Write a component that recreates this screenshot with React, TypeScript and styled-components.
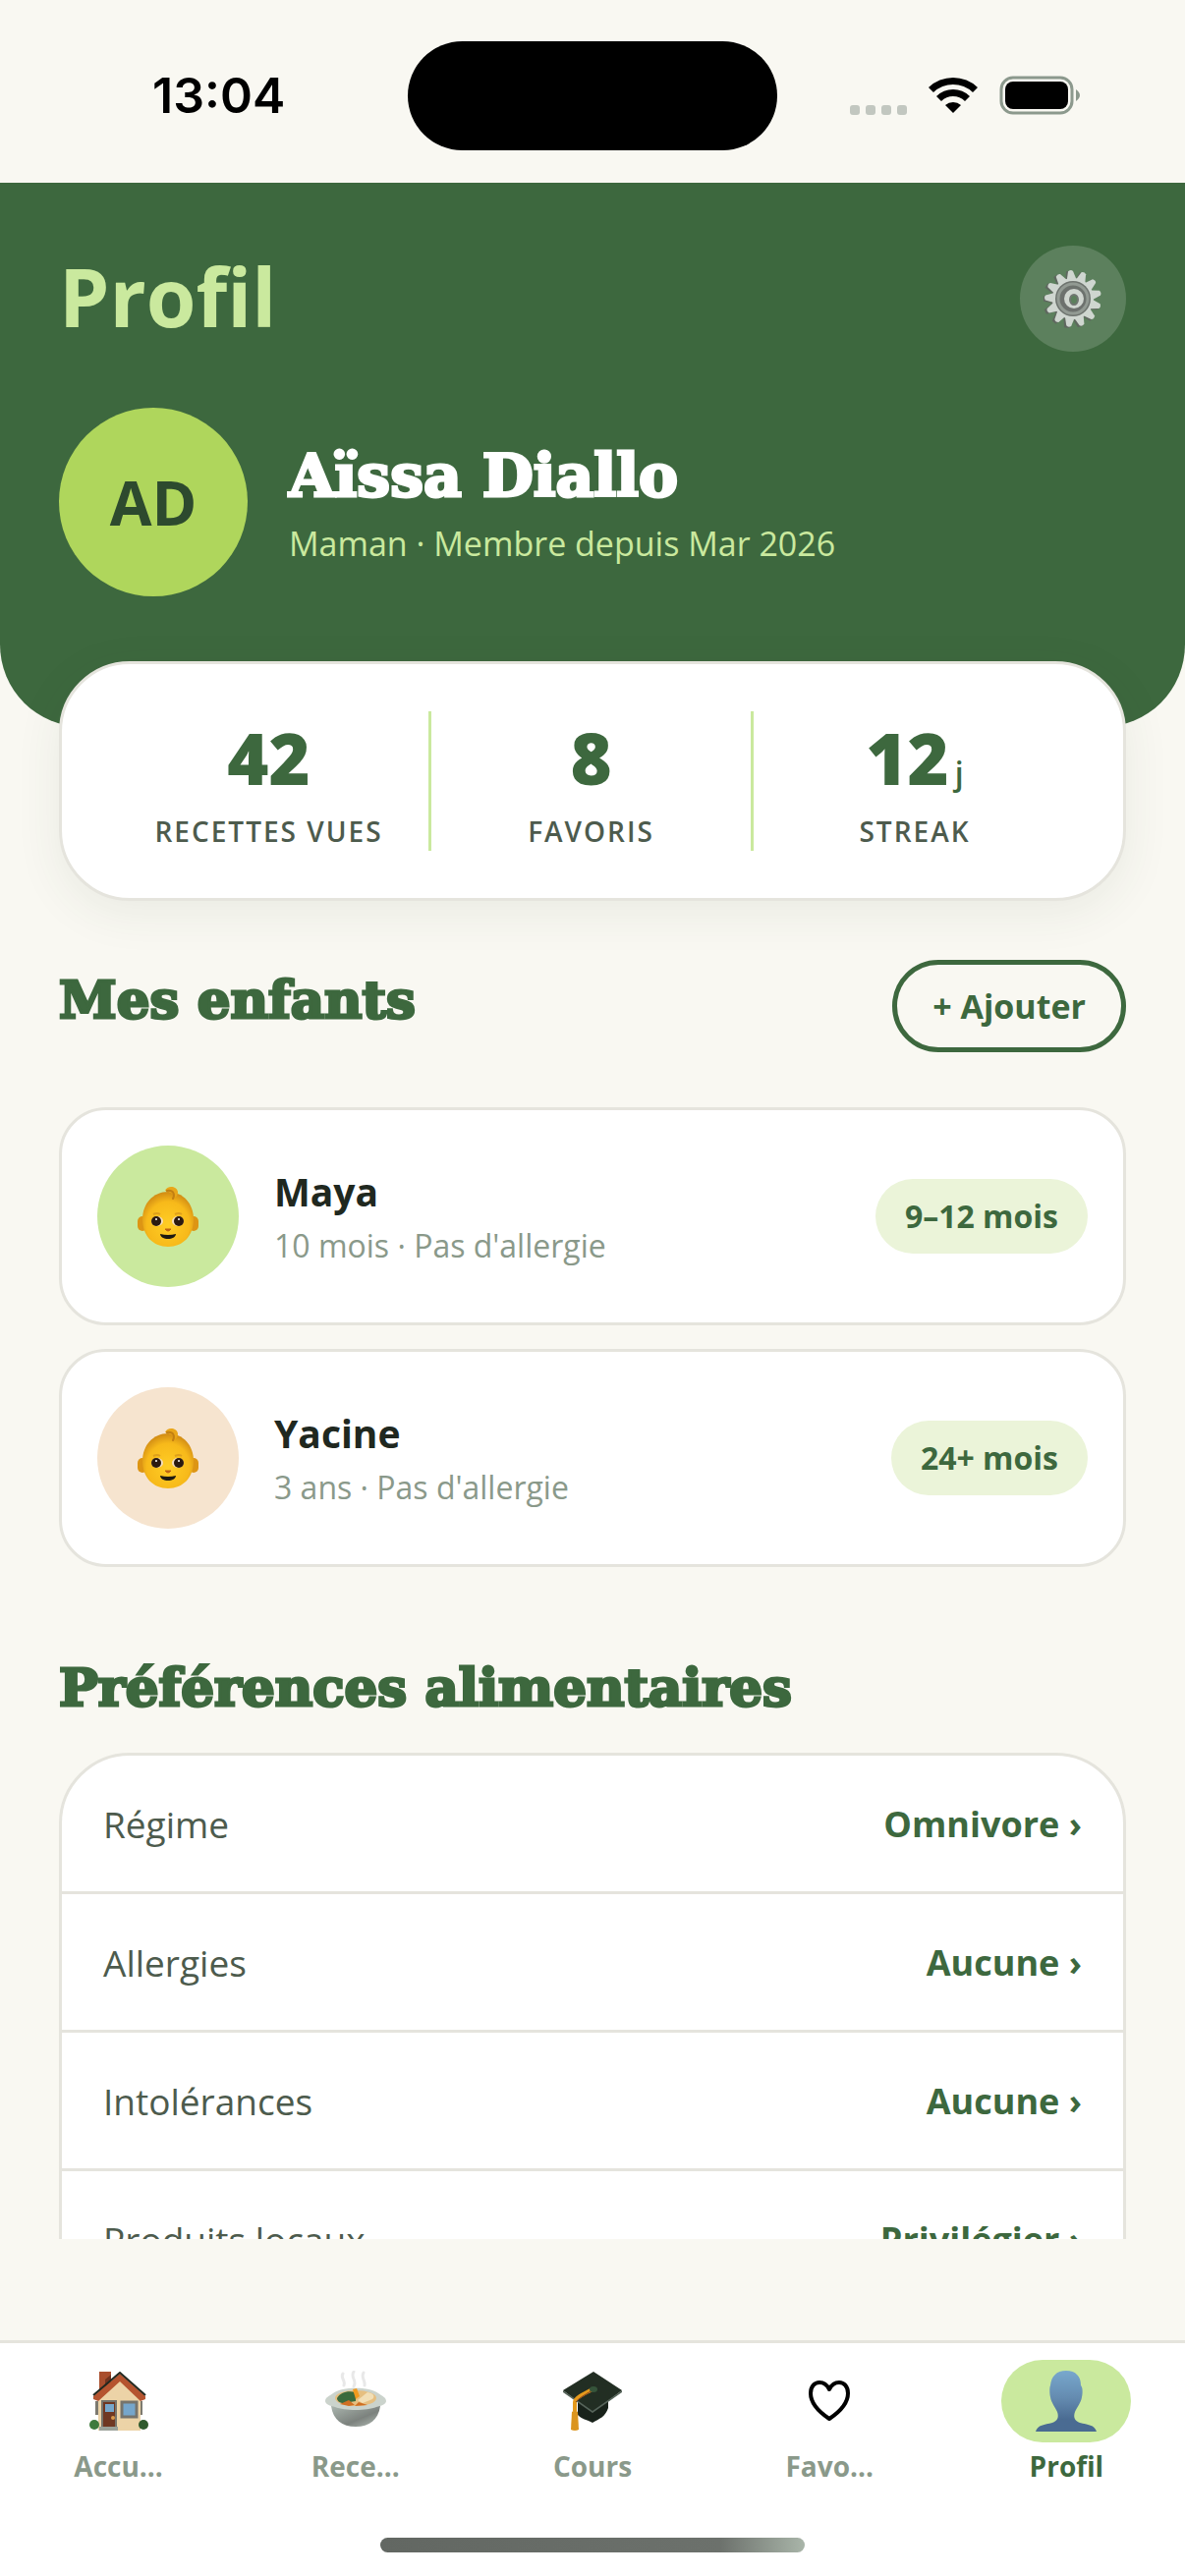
import * as React from "react";
import styled, { createGlobalStyle } from "styled-components";

const colors = {
  cream: "#f9f8f2",
  forest: "#3d683e",
  lime: "#cae99e",
  pear: "#afd65c",
  pale: "#ebf4d9",
  peach: "#f6e4cf",
  line: "#e5e4dd",
  dark: "#2d4a2e",
  ink: "#20281f",
  text: "#4d5b4d",
  muted: "#8a998a",
};

const teeth = Array.from({ length: 13 }, (_, i) => (i * 360) / 13);

const GearIcon = () => (
  <svg width="60" height="60" viewBox="0 0 60 60" aria-hidden="true">
    <g fill="#5f675f" transform="translate(-2 1)">
      {teeth.map((a) => (
        <path key={a} d="M26 9L27 1h5l2 8z" transform={`rotate(${a - 4} 30 30)`} />
      ))}
      <circle cx="30" cy="30" r="21" />
    </g>
    <g fill="#cfd6d0">
      {teeth.map((a) => (
        <path key={a} d="M25 11L27 2q3-2 5 0l3 9z" transform={`rotate(${a - 4} 30 30)`} />
      ))}
      <circle cx="30" cy="30" r="21" />
    </g>
    <circle cx="30" cy="30" r="18" fill="#6d736e" />
    <circle cx="30" cy="30" r="15" fill="none" stroke="#929a93" strokeWidth="3" />
    <circle cx="30" cy="31" r="12" fill="#6d716e" />
    <circle cx="31" cy="30" r="10" fill="#d0d6d0" />
    <ellipse cx="31" cy="31" rx="4" ry="5" fill="#5c805c" stroke="#6f7670" strokeWidth="2" />
  </svg>
);

const BabyIcon = () => (
  <svg width="62" height="62" viewBox="0 0 62 62" aria-hidden="true">
    <defs>
      <radialGradient id="skin" cx="50%" cy="60%" r="60%">
        <stop offset="0" stopColor="#ffcd24" />
        <stop offset="0.7" stopColor="#f7b91a" />
        <stop offset="1" stopColor="#d08a14" />
      </radialGradient>
    </defs>
    <rect x="0" y="31" width="10" height="15" rx="5" fill="#dd9514" />
    <rect x="52" y="31" width="10" height="15" rx="5" fill="#dd9514" />
    <path d="M31 6c15 0 26 12 26 28 0 17-11 28-26 28S5 51 5 34C5 18 16 6 31 6z" fill="url(#skin)" />
    <path d="M28 5c2-6 12-5 13 1 0 4-2 6-5 7 1-3 1-6-8-8z" fill="#e9a619" />
    <path d="M30 5c7-1 8 4 6 8" fill="none" stroke="#c27f12" strokeWidth="2" strokeLinecap="round" />
    <path d="M16 29q4-2 7 0M38 29q4-2 7 0" fill="none" stroke="#dfa01b" strokeWidth="2" />
    <ellipse cx="20" cy="36" rx="6" ry="5" fill="#f5dfbf" />
    <ellipse cx="41" cy="36" rx="6" ry="5" fill="#f5dfbf" />
    <circle cx="19" cy="36" r="5" fill="#2b1a10" />
    <circle cx="42" cy="36" r="5" fill="#2b1a10" />
    <circle cx="19" cy="34" r="1" fill="#fff" />
    <circle cx="42" cy="34" r="1" fill="#fff" />
    <path d="M28 44q3 4 6 0z" fill="#bd6214" stroke="#bd6214" strokeWidth="1" />
    <path d="M23 49q8 2 16 0c0 3-4 5-8 5s-8-2-8-5z" fill="#1d1a12" />
  </svg>
);

const HouseIcon = () => (
  <svg width="60" height="60" viewBox="0 0 60 60" aria-hidden="true">
    <path d="M10 0h12v12L10 20z" fill="#a94e2d" />
    <path d="M16 8l6-5v9l-6 6z" fill="#713420" />
    <path d="M6 30h5v14H6zM50 30h4v14h-4z" fill="#7d7a70" />
    <path d="M9 27L31 5l21 22v33H9z" fill="#ecd3a7" />
    <path d="M4 25L31 2l26 23v3l-5 2L31 10 9 30l-5-2z" fill="#b5542f" />
    <path d="M4 24L31 1l26 23" fill="none" stroke="#22281f" strokeWidth="2" />
    <path d="M13 30h14v27H13z" fill="#6f3722" stroke="#76746c" strokeWidth="2" />
    <path d="M16 33h9v8h-9z" fill="#76a6cb" />
    <circle cx="24" cy="47" r="2" fill="#d99a4c" />
    <path d="M33 31h15v15H33z" fill="#76a6cb" stroke="#76746c" strokeWidth="3" />
    <circle cx="5" cy="54" r="5" fill="#3f7a3c" />
    <circle cx="55" cy="54" r="5" fill="#2f5a2d" />
    <path d="M10 56h19v4H10z" fill="#9aa199" />
  </svg>
);

const BowlIcon = () => (
  <svg width="62" height="62" viewBox="0 0 62 62" aria-hidden="true">
    <defs>
      <linearGradient id="bowl" x1="0" y1="0" x2="1" y2="1">
        <stop offset="0" stopColor="#aab5ae" />
        <stop offset="0.6" stopColor="#7c827e" />
        <stop offset="1" stopColor="#b3bdb6" />
      </linearGradient>
    </defs>
    <path
      d="M18 3c-3 5 3 6 1 12M29 1c-4 6 4 9 0 15M39 2c-3 5 2 8 1 13"
      fill="none"
      stroke="#e8e8e8"
      strokeWidth="3"
      strokeLinecap="round"
    />
    <path d="M6 36c2 14 11 21 25 21s23-7 25-21z" fill="url(#bowl)" />
    <path d="M0 31c0-4 4-5 8-8 9-7 37-7 46 0 4 3 8 4 8 8 0 3-5 5-10 6-10 4-32 4-42 0-5-1-10-3-10-6z" fill="#cbd3cc" />
    <ellipse cx="31" cy="28" rx="21" ry="8" fill="#e6bf80" />
    <path d="M12 28c3-6 11-8 19-6v9l-12 2c-4 0-7-2-7-5z" fill="#3b6b3d" />
    <path d="M28 19l4-1 3 8-4 3z" fill="#f19a1f" />
    <path d="M33 30l10-8c6 1 8 4 5 7l-10 4z" fill="#f2dfb6" />
    <path d="M15 34l9-4 6 5-6 1zM30 36l4-4 9 3z" fill="#cf6f22" />
  </svg>
);

const CapIcon = () => (
  <svg width="60" height="60" viewBox="0 0 60 60" aria-hidden="true">
    <path d="M15 30v14c3 4 10 5 15 8 7-4 13-6 16-15V25z" fill="#18221a" />
    <path d="M31 0l29 19-30 23L0 19z" fill="#222e23" />
    <path d="M0 19l30 21 30-21v2L30 42 0 21z" fill="#56645a" />
    <path d="M30 18C20 23 12 27 12 31v9" fill="none" stroke="#e59a1c" strokeWidth="4" />
    <path d="M30 19C21 24 15 28 13 31" fill="none" stroke="#8d431c" strokeWidth="1" />
    <ellipse cx="31" cy="18" rx="4" ry="3" fill="#35543a" />
    <path d="M9 41q3-3 6 0l1 18q-4 2-8 0z" fill="#db951f" />
  </svg>
);

const HeartIcon = () => (
  <svg width="42" height="42" viewBox="0 0 42 42" aria-hidden="true">
    <path
      d="M21 39C12 33 2 24 2 13 2 6 6 2 11 2c5 0 8 3 10 7 2-4 5-7 10-7 5 0 9 4 9 11 0 11-10 20-19 26z"
      fill="none"
      stroke="#000"
      strokeWidth="4"
      strokeLinejoin="round"
    />
  </svg>
);

const PersonIcon = () => (
  <svg width="62" height="62" viewBox="0 0 62 62" aria-hidden="true">
    <defs>
      <linearGradient id="bust" x1="0" y1="0" x2="0" y2="1">
        <stop offset="0" stopColor="#78a8cd" />
        <stop offset="0.45" stopColor="#648bb0" />
        <stop offset="0.8" stopColor="#4a6b92" />
      </linearGradient>
    </defs>
    <path
      d="M31 0c10 0 15 6 15 15 2 2 2 8 1 12-1 6-5 10-7 15-2 6 0 9 5 11 8 2 15 2 17 9H0c2-7 9-7 17-9 5-2 7-5 5-11-2-5-6-9-7-15-1-4-1-10 0-12C16 6 21 0 31 0z"
      fill="url(#bust)"
    />
  </svg>
);

const WifiIcon = () => (
  <svg width="52" height="38" viewBox="0 0 52 38" aria-hidden="true">
    <path d="M1 11a36 36 0 0 1 50 0l-5 5a29 29 0 0 0-40 0z" />
    <path d="M9 20a24 24 0 0 1 34 0l-5 5a17 17 0 0 0-24 0z" />
    <path d="M18 29a12 12 0 0 1 16 0l-8 8z" />
  </svg>
);

const BatteryIcon = () => (
  <svg width="84" height="40" viewBox="0 0 84 40" aria-hidden="true">
    <rect x="2" y="2" width="72" height="36" rx="12" fill="none" stroke="#8c998d" strokeWidth="3" />
    <rect x="6" y="6" width="64" height="28" rx="8" />
    <path d="M78 14q8 6 0 12z" fill="#8c998d" />
  </svg>
);

interface IChild {
  name: string;
  info: string;
  stage: string;
  tint: string;
}

const kids: IChild[] = [
  { name: "Maya", info: "10 mois · Pas d'allergie", stage: "9–12 mois", tint: colors.lime },
  { name: "Yacine", info: "3 ans · Pas d'allergie", stage: "24+ mois", tint: colors.peach },
];

const preferences = [
  { label: "Régime", value: "Omnivore" },
  { label: "Allergies", value: "Aucune" },
  { label: "Intolérances", value: "Aucune" },
  { label: "Produits locaux", value: "Privilégier" },
];

const tabs = [
  { name: "Accueil", label: "Accu...", icon: <HouseIcon /> },
  { name: "Recettes", label: "Rece...", icon: <BowlIcon /> },
  { name: "Cours", label: "Cours", icon: <CapIcon /> },
  { name: "Favoris", label: "Favo...", icon: <HeartIcon /> },
  { name: "Profil", label: "Profil", icon: <PersonIcon />, active: true },
];

const App: React.FunctionComponent = () => {
  return (
    <Screen>
      <GlobalStyle />
      <StatusBar>
        <Clock>13:04</Clock>
        <Island />
        <StatusIcons>
          <Dots>
            <i />
            <i />
            <i />
            <i />
          </Dots>
          <WifiIcon />
          <BatteryIcon />
        </StatusIcons>
      </StatusBar>

      <Content>
        <Header>
          <TitleRow>
            <PageTitle>Profil</PageTitle>
            <SettingsButton aria-label="Paramètres">
              <GearIcon />
            </SettingsButton>
          </TitleRow>
          <User>
            <Avatar>AD</Avatar>
            <UserText>
              <UserName>Aïssa Diallo</UserName>
              <UserInfo>Maman · Membre depuis Mar 2026</UserInfo>
            </UserText>
          </User>
        </Header>

        <Stats>
          <Stat>
            <StatValue>42</StatValue>
            <StatLabel>RECETTES VUES</StatLabel>
          </Stat>
          <Stat>
            <StatValue>8</StatValue>
            <StatLabel>FAVORIS</StatLabel>
          </Stat>
          <Stat>
            <StatValue>
              12<small>j</small>
            </StatValue>
            <StatLabel>STREAK</StatLabel>
          </Stat>
        </Stats>

        <SectionHead>
          <SectionTitle>Mes enfants</SectionTitle>
          <AddButton>+ Ajouter</AddButton>
        </SectionHead>
        <Children>
          {kids.map((kid) => (
            <ChildCard key={kid.name}>
              <ChildAvatar $tint={kid.tint}>
                <BabyIcon />
              </ChildAvatar>
              <ChildText>
                <ChildName>{kid.name}</ChildName>
                <ChildInfo>{kid.info}</ChildInfo>
              </ChildText>
              <Stage>{kid.stage}</Stage>
            </ChildCard>
          ))}
        </Children>

        <PreferencesHead>
          <SectionTitle>Préférences alimentaires</SectionTitle>
        </PreferencesHead>
        <Preferences>
          {preferences.map((pref) => (
            <Preference key={pref.label}>
              <span>{pref.label}</span>
              <strong>{pref.value} ›</strong>
            </Preference>
          ))}
        </Preferences>
      </Content>

      <TabBar>
        {tabs.map((tab) => (
          <Tab key={tab.name} href="#" aria-label={tab.name} $active={tab.active}>
            <TabIcon $active={tab.active}>{tab.icon}</TabIcon>
            {tab.label}
          </Tab>
        ))}
        <HomeIndicator />
      </TabBar>
    </Screen>
  );
};

export default App;

const GlobalStyle = createGlobalStyle`
  * {
    box-sizing: border-box;
  }

  body {
    margin: 0;
    background: ${colors.cream};
    font-family: "Open Sans", "Noto Sans", sans-serif;
  }

  h1, h2, p {
    margin: 0;
  }

  button {
    font-family: inherit;
    cursor: pointer;
  }

  svg {
    display: block;
    flex: none;
  }
`;

const Screen = styled.div`
  display: flex;
  flex-direction: column;
  height: 100vh;
  background: ${colors.cream};
`;

const StatusBar = styled.div`
  display: grid;
  grid-template-columns: 1fr auto 1fr;
  align-items: center;
  flex: none;
  height: 186px;
  padding: 8px 105px 0;
`;

const Clock = styled.div`
  padding-left: 50px;
  font: 600 50px "Inter", sans-serif;
`;

const Island = styled.div`
  width: 376px;
  height: 111px;
  border-radius: 56px;
  background: #000;
`;

const StatusIcons = styled.div`
  display: flex;
  justify-content: flex-end;
  align-items: center;
  gap: 21px;
`;

const Dots = styled.div`
  display: flex;
  align-self: flex-end;
  gap: 6px;

  i {
    width: 10px;
    height: 10px;
    border-radius: 3px;
    background: #c2c7c0;
  }
`;

const Content = styled.main`
  flex: 1;
  min-height: 0;
  margin-bottom: 103px;
  overflow: hidden;
`;

const Header = styled.header`
  padding: 64px 60px 133px;
  border-radius: 0 0 84px 84px;
  background: ${colors.forest};
`;

const TitleRow = styled.div`
  display: flex;
  justify-content: space-between;
  align-items: flex-start;
  margin-bottom: 57px;
`;

const PageTitle = styled.h1`
  color: ${colors.lime};
  font-size: 82px;
  font-weight: 700;
  line-height: 102px;
`;

const SettingsButton = styled.button`
  display: flex;
  justify-content: center;
  align-items: center;
  width: 108px;
  height: 108px;
  border: 0;
  border-radius: 50%;
  background: rgba(255, 255, 255, 0.16);
`;

const User = styled.div`
  display: flex;
  align-items: center;
  gap: 42px;
`;

const Avatar = styled.div`
  display: flex;
  justify-content: center;
  align-items: center;
  width: 192px;
  height: 192px;
  border-radius: 50%;
  background: ${colors.pear};
  color: ${colors.dark};
  font-size: 62px;
  font-weight: 700;
`;

const UserText = styled.div`
  padding-top: 6px;
`;

const displayFont = `
  font-family: "DejaVu Serif", serif;
  font-weight: 700;
`;

const UserName = styled.h2`
  ${displayFont}
  color: #fff;
  font-size: 60px;
  line-height: 72px;
  -webkit-text-stroke: 3px #fff;
`;

const UserInfo = styled.p`
  margin-top: 6px;
  color: ${colors.lime};
  font-size: 34px;
  line-height: 54px;
`;

const Stats = styled.section`
  display: grid;
  grid-template-columns: repeat(3, 1fr);
  position: relative;
  margin: -67px 60px 60px;
  padding: 48px;
  border: 3px solid ${colors.line};
  border-radius: 72px;
  background: #fff;
  box-shadow: 0 12px 48px rgba(45, 74, 46, 0.08);
`;

const Stat = styled.div`
  text-align: center;

  &:not(:last-child) {
    border-right: 3px solid ${colors.lime};
  }
`;

const StatValue = styled.div`
  height: 95px;
  margin-bottom: 8px;
  color: ${colors.forest};
  font-size: 72px;
  font-weight: 800;
  line-height: 95px;

  small {
    margin-left: 6px;
    font-size: 32px;
    font-weight: 600;
    line-height: 1;
  }
`;

const StatLabel = styled.div`
  color: ${colors.text};
  font-size: 28px;
  font-weight: 600;
  letter-spacing: 2px;
  line-height: 39px;
`;

const SectionHead = styled.div`
  display: flex;
  justify-content: space-between;
  align-items: flex-start;
  margin: 0 60px 56px;
`;

const PreferencesHead = styled(SectionHead)`
  margin: 82px 60px 27px;
`;

const SectionTitle = styled.h2`
  ${displayFont}
  color: ${colors.forest};
  font-size: 53px;
  line-height: 80px;
  -webkit-text-stroke: 3px ${colors.forest};
`;

const AddButton = styled.button`
  height: 94px;
  padding: 0 36px;
  border: 5px solid ${colors.forest};
  border-radius: 47px;
  background: transparent;
  color: ${colors.forest};
  font-size: 34px;
  font-weight: 700;
`;

const Children = styled.div`
  display: flex;
  flex-direction: column;
  gap: 24px;
  margin: 0 60px;
`;

const ChildCard = styled.article`
  display: flex;
  align-items: center;
  gap: 36px;
  padding: 36px;
  border: 3px solid ${colors.line};
  border-radius: 48px;
  background: #fff;
`;

const ChildAvatar = styled.div<{ $tint: string }>`
  display: flex;
  justify-content: center;
  align-items: center;
  width: 144px;
  height: 144px;
  border-radius: 50%;
  background: ${(props) => props.$tint};
`;

const ChildText = styled.div`
  flex: 1;
`;

const ChildName = styled.div`
  color: ${colors.ink};
  font-size: 39px;
  font-weight: 700;
  line-height: 60px;
`;

const ChildInfo = styled.div`
  color: ${colors.muted};
  font-size: 32px;
  line-height: 50px;
`;

const Stage = styled.span`
  padding: 0 30px;
  border-radius: 38px;
  background: ${colors.pale};
  color: ${colors.forest};
  font-size: 32px;
  font-weight: 700;
  line-height: 76px;
`;

const Preferences = styled.div`
  margin: 0 60px;
  border: 3px solid ${colors.line};
  border-radius: 72px;
  background: #fff;
  overflow: hidden;
`;

const Preference = styled.button`
  display: flex;
  justify-content: space-between;
  align-items: center;
  width: 100%;
  height: 141px;
  padding: 0 42px;
  border: 0;
  border-bottom: 3px solid ${colors.line};
  background: transparent;
  color: ${colors.text};
  font-size: 37px;

  strong {
    color: ${colors.forest};
    font-size: 36px;
    font-weight: 700;
  }
`;

const TabBar = styled.nav`
  display: grid;
  grid-template-columns: repeat(5, 1fr);
  flex: none;
  padding: 17px 0 24px;
  border-top: 3px solid ${colors.line};
  background: #fff;
`;

const Tab = styled.a<{ $active?: boolean }>`
  display: flex;
  flex-direction: column;
  align-items: center;
  color: ${(props) => (props.$active ? colors.forest : colors.muted)};
  font-size: 28px;
  font-weight: 700;
  line-height: 48px;
  text-decoration: none;
`;

const TabIcon = styled.span<{ $active?: boolean }>`
  display: flex;
  justify-content: center;
  align-items: center;
  width: 132px;
  height: 84px;
  border-radius: 42px;
  background: ${(props) => (props.$active ? colors.lime : "transparent")};
`;

const HomeIndicator = styled.div`
  grid-column: 1 / -1;
  justify-self: center;
  width: 432px;
  height: 15px;
  margin-top: 49px;
  border-radius: 8px;
  background: linear-gradient(to right, #626762, #6c716c 80%, #a9b5a9);
`;
